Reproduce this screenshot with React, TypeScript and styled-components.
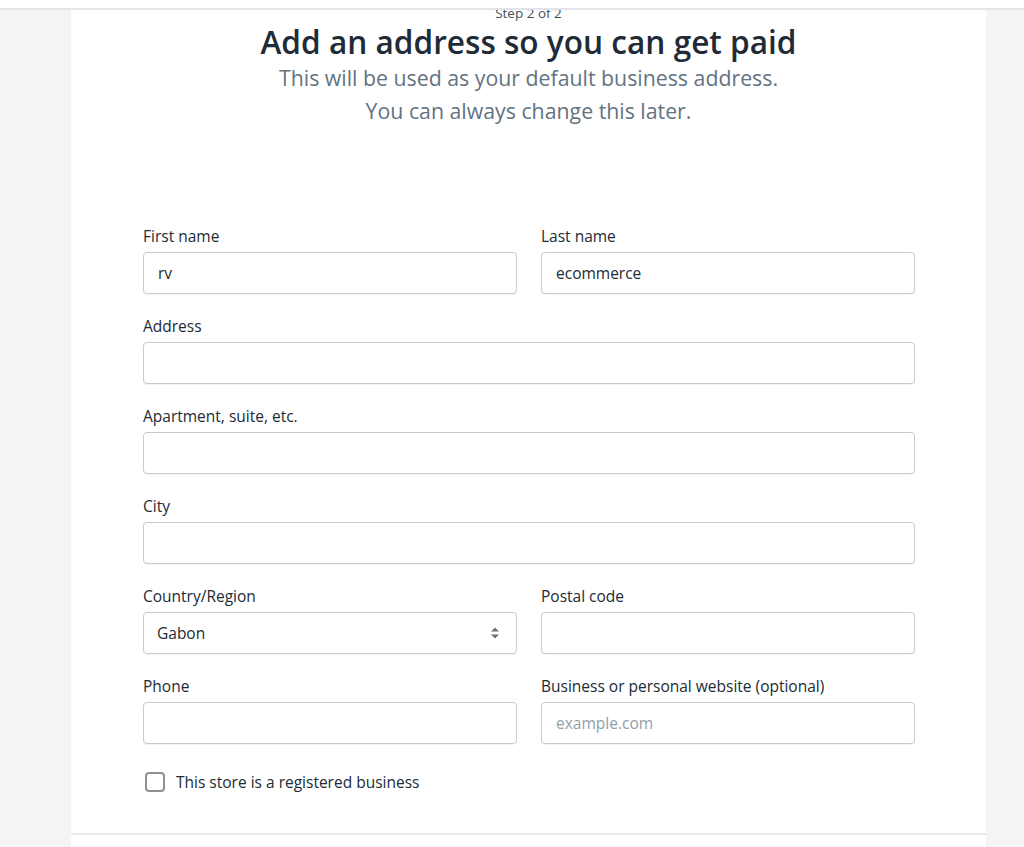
import React from "react";
import styled, { createGlobalStyle } from "styled-components";

const Global = createGlobalStyle`
  html, body { margin: 0; padding: 0; }
  body {
    background: #f4f4f4;
    font-family: "Open Sans", "Noto Sans", sans-serif;
    color: #212b36;
    overflow: hidden;
  }
`;

const TopBar = styled.div`
  position: fixed;
  top: 0;
  left: 0;
  right: 0;
  height: 8px;
  background: #fff;
  border-bottom: 2px solid #e3e3ea;
  z-index: 5;
`;

const Page = styled.div`
  min-height: 847px;
  background: #f4f4f4;
`;

const Card = styled.div`
  margin-left: 71px;
  width: 915px;
  min-height: 847px;
  background: #fff;
  box-sizing: border-box;
`;

const Header = styled.header`
  display: flex;
  flex-direction: column;
  align-items: center;
  text-align: center;
`;

const Step = styled.div`
  font-size: 13.5px;
  line-height: 20px;
  margin-top: 3px;
  color: #454f5b;
`;

const Title = styled.h1`
  margin: 0;
  font-size: 31.6px;
  line-height: 38px;
  font-weight: 600;
  color: #212b36;
`;

const Subtitle = styled.p`
  margin: 0;
  font-size: 21.3px;
  line-height: 33px;
  color: #637381;
`;

const Form = styled.form`
  padding: 99px 71px 0 72px;
  display: flex;
  flex-direction: column;
  gap: 22px;
`;

const Row = styled.div<{ $cols?: number }>`
  display: grid;
  grid-template-columns: repeat(${(p) => p.$cols ?? 1}, 1fr);
  column-gap: 24px;
`;

const Field = styled.div`
  display: flex;
  flex-direction: column;
  gap: 6px;
`;

const Label = styled.label`
  font-size: 15.5px;
  line-height: 20px;
  color: #212b36;
`;

const Input = styled.input`
  box-sizing: border-box;
  height: 42px;
  width: 100%;
  border: 1px solid #c4cdd5;
  border-radius: 4px;
  padding: 0 14px;
  font-family: inherit;
  font-size: 15.5px;
  color: #212b36;
  background: #fff;
  box-shadow: 0 1px 0 rgba(22, 29, 37, 0.05);
  &::placeholder { color: #919eab; }
`;

const SelectBox = styled.div`
  box-sizing: border-box;
  height: 42px;
  border: 1px solid #c4cdd5;
  border-radius: 4px;
  padding: 0 16px 0 13px;
  display: flex;
  align-items: center;
  justify-content: space-between;
  font-size: 15.5px;
  color: #212b36;
  box-shadow: 0 1px 0 rgba(22, 29, 37, 0.05);
`;

const CheckRow = styled.label`
  display: flex;
  align-items: center;
  gap: 11px;
  margin-top: 5px;
  padding-left: 2px;
  font-size: 15.5px;
  color: #212b36;
`;

const CheckBox = styled.span`
  box-sizing: border-box;
  width: 20px;
  height: 20px;
  border: 2px solid #8c9196;
  border-radius: 4px;
  background: #fff;
`;

const Divider = styled.hr`
  margin: 40px 0 0;
  border: none;
  border-top: 2px solid #e8ecf0;
`;

const Arrows = () => (
  <svg width="10" height="14" viewBox="0 0 10 14">
    <path d="M5 1.5 L9 5.5 H1 Z" fill="#637381" />
    <path d="M5 12.5 L9 8.5 H1 Z" fill="#637381" />
  </svg>
);

export default function App() {
  return (
    <Page>
      <Global />
      <TopBar />
      <Card>
        <Header>
          <Step>Step 2 of 2</Step>
          <Title>Add an address so you can get paid</Title>
          <Subtitle>This will be used as your default business address.</Subtitle>
          <Subtitle>You can always change this later.</Subtitle>
        </Header>
        <Form onSubmit={(e) => e.preventDefault()}>
          <Row $cols={2}>
            <Field>
              <Label>First name</Label>
              <Input defaultValue="rv" />
            </Field>
            <Field>
              <Label>Last name</Label>
              <Input defaultValue="ecommerce" />
            </Field>
          </Row>
          <Row>
            <Field>
              <Label>Address</Label>
              <Input />
            </Field>
          </Row>
          <Row>
            <Field>
              <Label>Apartment, suite, etc.</Label>
              <Input />
            </Field>
          </Row>
          <Row>
            <Field>
              <Label>City</Label>
              <Input />
            </Field>
          </Row>
          <Row $cols={2}>
            <Field>
              <Label>Country/Region</Label>
              <SelectBox>
                <span>Gabon</span>
                <Arrows />
              </SelectBox>
            </Field>
            <Field>
              <Label>Postal code</Label>
              <Input />
            </Field>
          </Row>
          <Row $cols={2}>
            <Field>
              <Label>Phone</Label>
              <Input />
            </Field>
            <Field>
              <Label>Business or personal website (optional)</Label>
              <Input placeholder="example.com" />
            </Field>
          </Row>
          <CheckRow>
            <CheckBox />
            This store is a registered business
          </CheckRow>
        </Form>
        <Divider />
      </Card>
    </Page>
  );
}
